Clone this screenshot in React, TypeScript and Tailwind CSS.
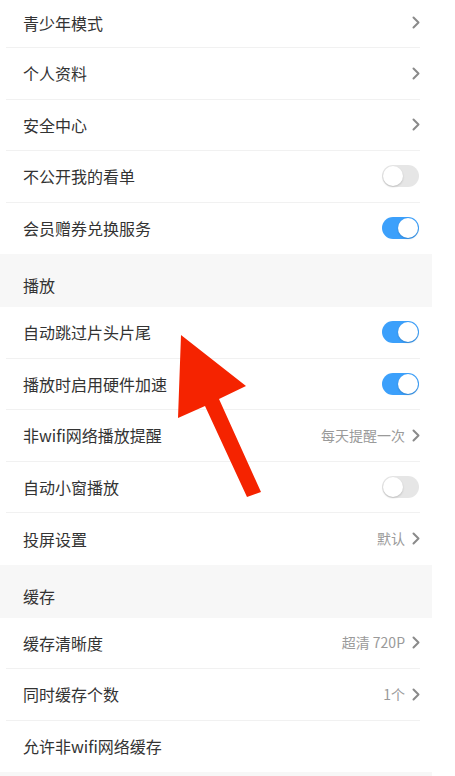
import React from "react";

type Row = {
  label: string;
  kind: "link" | "on" | "off" | "none";
  value?: string;
};

const top: Row[] = [
  { label: "个人资料", kind: "link" },
  { label: "安全中心", kind: "link" },
  { label: "不公开我的看单", kind: "off" },
  { label: "会员赠券兑换服务", kind: "on" },
];

const play: Row[] = [
  { label: "自动跳过片头片尾", kind: "on" },
  { label: "播放时启用硬件加速", kind: "on" },
  { label: "非wifi网络播放提醒", kind: "link", value: "每天提醒一次" },
  { label: "自动小窗播放", kind: "off" },
  { label: "投屏设置", kind: "link", value: "默认" },
];

const cache: Row[] = [
  { label: "缓存清晰度", kind: "link", value: "超清 720P" },
  { label: "同时缓存个数", kind: "link", value: "1个" },
  { label: "允许非wifi网络缓存", kind: "none" },
];

function Chevron() {
  return (
    <svg width="10" height="13" viewBox="0 0 10 13" className="shrink-0">
      <polyline points="3.5,1.5 8.5,6.5 3.5,11.5" fill="none" stroke="#8a8a8a" strokeWidth="2" strokeLinecap="round" strokeLinejoin="round" />
    </svg>
  );
}

function Toggle({ on }: { on: boolean }) {
  return (
    <div
      className={[
        "flex h-[22px] w-[37px] items-center rounded-full p-[1px] mr-[1px]",
        on ? "justify-end bg-[#3ca0fb]" : "justify-start bg-[#e6e6e6]",
      ].join(" ")}
    >
      <div className="h-[20px] w-[20px] rounded-full bg-white shadow-[0_1px_2px_rgba(0,0,0,0.18)]" />
    </div>
  );
}

function SettingRow({ row, last, first }: { row: Row; last?: boolean; first?: boolean }) {
  return (
    <div className={["ml-[6px] mr-[12px] flex items-center", first ? "h-[48px] pb-[2px]" : "h-[51.5px]", last ? "" : "border-b border-[#f1f1f1]"].join(" ")}>
      <span className="pl-[17px] text-[16px] text-[#333333]">{row.label}</span>
      <div className="ml-auto flex items-center gap-[5px]">
        {row.value && <span className="text-[14px] text-[#9a9a9a]">{row.value}</span>}
        {row.kind === "link" && <Chevron />}
        {row.kind === "on" && <Toggle on />}
        {row.kind === "off" && <Toggle on={false} />}
      </div>
    </div>
  );
}

function SectionHeader({ title }: { title: string }) {
  return (
    <div className="flex h-[53px] items-end bg-[#f7f7f7] pb-[11px] pl-[23px]">
      <span className="text-[16px] leading-[22px] text-[#333333]">{title}</span>
    </div>
  );
}

export default function App() {
  return (
    <div className="relative h-[776px] w-[455px] overflow-hidden bg-white" style={{ fontFamily: '"Noto Sans CJK SC", "Noto Sans", sans-serif' }}>
      <div className="w-[432px]">
        <SettingRow row={{ label: "青少年模式", kind: "link" }} first />
        {top.map((r, i) => (
          <SettingRow key={r.label} row={r} last={i === top.length - 1} />
        ))}
        <SectionHeader title="播放" />
        {play.map((r, i) => (
          <SettingRow key={r.label} row={r} last={i === play.length - 1} />
        ))}
        <SectionHeader title="缓存" />
        {cache.map((r, i) => (
          <SettingRow key={r.label} row={r} last={i === cache.length - 1} />
        ))}
        <div className="h-[10px] bg-[#f7f7f7]" />
      </div>

      {/* red annotation arrow */}
      <svg className="pointer-events-none absolute left-0 top-0" width="455" height="776" viewBox="0 0 455 776">
        <polygon points="181,335 246,386 219,399 261,492 247,497 205,406 178,418" fill="#f52300" />
      </svg>
    </div>
  );
}
